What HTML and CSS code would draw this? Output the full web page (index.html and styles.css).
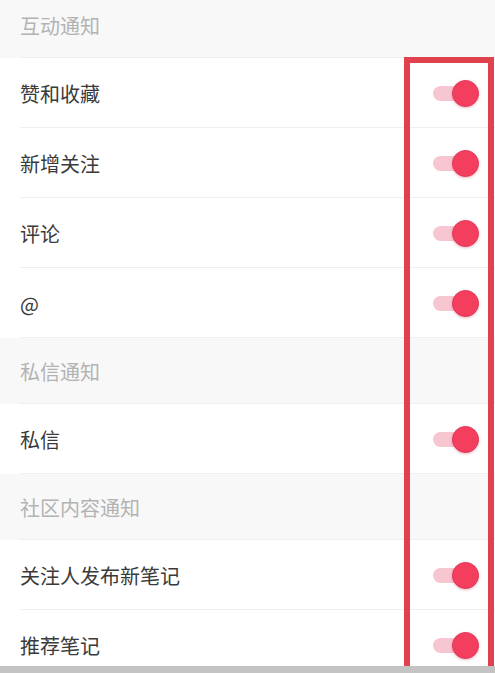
FILE: index.html
```html
<!DOCTYPE html>
<html lang="zh-CN">

<head>
    <meta charset="UTF-8">
    <meta name="viewport" content="width=device-width, initial-scale=1.0">
    <title>通知设置</title>
    <link rel="stylesheet" href="styles.css">
</head>

<body>
    <div class="list">
        <div class="section-title">互动通知</div>
        <div class="row">
            <span class="label">赞和收藏</span>
            <div class="switch"><div class="track"></div><div class="thumb"></div></div>
        </div>
        <div class="row">
            <span class="label">新增关注</span>
            <div class="switch"><div class="track"></div><div class="thumb"></div></div>
        </div>
        <div class="row">
            <span class="label">评论</span>
            <div class="switch"><div class="track"></div><div class="thumb"></div></div>
        </div>
        <div class="row">
            <span class="label">@</span>
            <div class="switch"><div class="track"></div><div class="thumb"></div></div>
        </div>

        <div class="section-title">私信通知</div>
        <div class="row">
            <span class="label">私信</span>
            <div class="switch"><div class="track"></div><div class="thumb"></div></div>
        </div>

        <div class="section-title">社区内容通知</div>
        <div class="row">
            <span class="label">关注人发布新笔记</span>
            <div class="switch"><div class="track"></div><div class="thumb"></div></div>
        </div>
        <div class="row">
            <span class="label">推荐笔记</span>
            <div class="switch"><div class="track"></div><div class="thumb"></div></div>
        </div>
    </div>

    <!-- highlight frame round the switches -->
    <div class="highlight"></div>
    <div class="bottom-bar"></div>
</body>

</html>
```

FILE: styles.css
```css
* {
    box-sizing: border-box;
    font-family: 'Noto Sans CJK SC', 'Noto Sans', sans-serif;
}

body {
    margin: 0;
    padding: 0;
    background-color: #fff;
    height: 673px;
    overflow: hidden;
}

.list {
    margin-top: -8px;
}

.section-title {
    height: 66px;
    display: flex;
    align-items: center;
    padding-left: 20px;
    background-color: #f8f8f8;
    color: #b3b3b3;
    font-size: 20px;
    position: relative;
}

.row {
    height: 70px;
    display: flex;
    align-items: center;
    justify-content: space-between;
    padding: 0 16px 0 20px;
    background-color: #fff;
    position: relative;
}

.row::after,
.section-title::after {
    content: '';
    position: absolute;
    left: 20px;
    right: 0;
    bottom: 0;
    height: 1px;
    background-color: #efefef;
}

.label {
    font-size: 20px;
    color: #3a3a3a;
}

.switch {
    display: flex;
    align-items: center;
    width: 46px;
}

.track {
    width: 36px;
    height: 15px;
    border-radius: 8px;
    background-color: #f8c6d0;
}

.thumb {
    width: 27px;
    height: 27px;
    margin-left: -17px;
    border-radius: 50%;
    background-color: #f33e5d;
    border: 1px solid #e0375a;
    box-shadow: 0 1px 3px rgba(180, 30, 60, 0.3);
}

.highlight {
    position: absolute;
    left: 404px;
    top: 57px;
    width: 90px;
    height: 640px;
    border: 6px solid #e1414c;
    border-bottom: none;
}

.bottom-bar {
    position: absolute;
    left: 0;
    right: 0;
    top: 666px;
    height: 7px;
    background-color: #c3c3c3;
}
```
